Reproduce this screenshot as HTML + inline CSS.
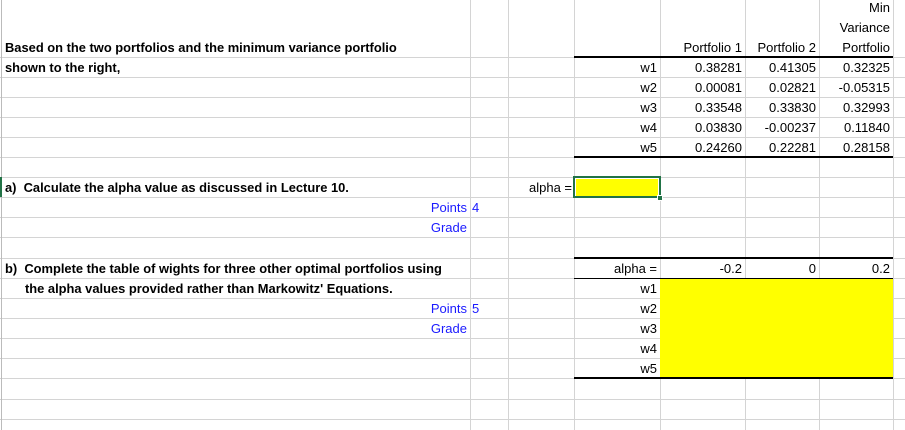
<!DOCTYPE html>
<html><head><meta charset="utf-8"><style>
*{margin:0;padding:0;box-sizing:border-box}
body{width:905px;height:430px;background:#fff;position:relative;overflow:hidden;font-family:"Liberation Sans",Arial,sans-serif;font-size:13px;color:#000}
.h{position:absolute;left:0;width:905px;height:1px;background:#d4d4d4}
.v{position:absolute;top:0;height:430px;width:1px;background:#d4d4d4}
.k{position:absolute;background:#000}
.t{position:absolute;height:20px;line-height:21px;white-space:nowrap}
.r{text-align:right}
.b{font-weight:bold;font-size:12.9px}
.bl{color:#1a1aff}
</style></head><body>
<div class="h" style="top:57px"></div><div class="h" style="top:77px"></div><div class="h" style="top:97px"></div><div class="h" style="top:117px"></div><div class="h" style="top:137px"></div><div class="h" style="top:157px"></div><div class="h" style="top:177px"></div><div class="h" style="top:197px"></div><div class="h" style="top:217px"></div><div class="h" style="top:237px"></div><div class="h" style="top:258px"></div><div class="h" style="top:278px"></div><div class="h" style="top:298px"></div><div class="h" style="top:318px"></div><div class="h" style="top:338px"></div><div class="h" style="top:358px"></div><div class="h" style="top:378px"></div><div class="h" style="top:399px"></div><div class="h" style="top:419px"></div>
<div class="v" style="left:1px;background:#bbb"></div>
<div class="v" style="left:470px"></div><div class="v" style="left:508px"></div><div class="v" style="left:574px"></div><div class="v" style="left:660px"></div><div class="v" style="left:745px"></div><div class="v" style="left:819px"></div><div class="v" style="left:893px"></div>

<div style="position:absolute;left:660px;top:278px;width:233px;height:100px;background:#ffff00"></div>
<div style="position:absolute;left:573px;top:176px;width:88px;height:22px;border:2px solid #217346;background:#fff"></div>
<div style="position:absolute;left:576px;top:179px;width:82px;height:17px;background:#ffff00"></div>
<div style="position:absolute;left:657px;top:195px;width:6px;height:6px;background:#217346;border:1px solid #fff"></div>
<div style="position:absolute;left:0;top:177px;width:2px;height:20px;background:#217346"></div>

<div class="k" style="left:574px;top:56px;width:319px;height:2px"></div>
<div class="k" style="left:574px;top:156px;width:319px;height:2px"></div>
<div class="k" style="left:574px;top:257px;width:319px;height:2px"></div>
<div class="k" style="left:574px;top:278px;width:319px;height:1px"></div>
<div class="k" style="left:574px;top:377px;width:319px;height:2px"></div>

<div class="t b" style="left:5px;top:37px">Based on the two portfolios and the minimum variance portfolio</div>
<div class="t b" style="left:5px;top:57px">shown to the right,</div>
<div class="t b" style="left:5px;top:177px">a)&nbsp; Calculate the alpha value as discussed in Lecture 10.</div>
<div class="t b" style="left:5px;top:258px">b)&nbsp; Complete the table of wights for three other optimal portfolios using</div>
<div class="t b" style="left:25px;top:278px">the alpha values provided rather than Markowitz' Equations.</div>

<div class="t r bl" style="right:438px;top:197px">Points</div><div class="t bl" style="left:472px;top:197px">4</div>
<div class="t r bl" style="right:438px;top:217px">Grade</div>
<div class="t r bl" style="right:438px;top:298px">Points</div><div class="t bl" style="left:472px;top:298px">5</div>
<div class="t r bl" style="right:438px;top:318px">Grade</div>

<div class="t r" style="right:333px;top:177px">alpha =</div>

<div class="t r" style="right:15px;top:-3px">Min</div>
<div class="t r" style="right:15px;top:17px">Variance</div>
<div class="t r" style="right:15px;top:37px">Portfolio</div>
<div class="t r" style="right:163px;top:37px">Portfolio 1</div>
<div class="t r" style="right:89px;top:37px">Portfolio 2</div>

<div class="t r" style="right:248px;top:57px">w1</div><div class="t r" style="right:163px;top:57px">0.38281</div><div class="t r" style="right:89px;top:57px">0.41305</div><div class="t r" style="right:15px;top:57px">0.32325</div>
<div class="t r" style="right:248px;top:77px">w2</div><div class="t r" style="right:163px;top:77px">0.00081</div><div class="t r" style="right:89px;top:77px">0.02821</div><div class="t r" style="right:15px;top:77px">-0.05315</div>
<div class="t r" style="right:248px;top:97px">w3</div><div class="t r" style="right:163px;top:97px">0.33548</div><div class="t r" style="right:89px;top:97px">0.33830</div><div class="t r" style="right:15px;top:97px">0.32993</div>
<div class="t r" style="right:248px;top:117px">w4</div><div class="t r" style="right:163px;top:117px">0.03830</div><div class="t r" style="right:89px;top:117px">-0.00237</div><div class="t r" style="right:15px;top:117px">0.11840</div>
<div class="t r" style="right:248px;top:137px">w5</div><div class="t r" style="right:163px;top:137px">0.24260</div><div class="t r" style="right:89px;top:137px">0.22281</div><div class="t r" style="right:15px;top:137px">0.28158</div>

<div class="t r" style="right:248px;top:258px">alpha =</div><div class="t r" style="right:163px;top:258px">-0.2</div><div class="t r" style="right:89px;top:258px">0</div><div class="t r" style="right:15px;top:258px">0.2</div>
<div class="t r" style="right:248px;top:278px">w1</div>
<div class="t r" style="right:248px;top:298px">w2</div>
<div class="t r" style="right:248px;top:318px">w3</div>
<div class="t r" style="right:248px;top:338px">w4</div>
<div class="t r" style="right:248px;top:358px">w5</div>
</body></html>
